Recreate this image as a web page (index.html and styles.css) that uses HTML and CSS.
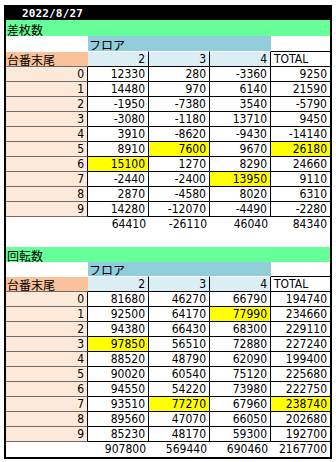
FILE: index.html
```html
<!DOCTYPE html>
<html lang="ja">
<head>
<meta charset="utf-8">
<link rel="stylesheet" href="styles.css">
</head>
<body>
<div class="sheet">
  <div class="title">2022/8/27</div>

  <div class="band band-first"><span class="jp">差枚数</span></div>
  <div class="row floor-row"><div></div><div class="floor"><span class="jp">フロア</span></div><div></div></div>
  <div class="row head">
    <div class="c0h"><span class="jp">台番末尾</span></div><div class="hc">2</div><div class="hc">3</div><div class="hc">4</div><div class="ht">TOTAL</div>
  </div>
  <div class="row data"><div class="c0">0</div><div>12330</div><div>280</div><div>-3360</div><div>9250</div></div>
  <div class="row data"><div class="c0">1</div><div>14480</div><div>970</div><div>6140</div><div>21590</div></div>
  <div class="row data"><div class="c0">2</div><div>-1950</div><div>-7380</div><div>3540</div><div>-5790</div></div>
  <div class="row data"><div class="c0">3</div><div>-3080</div><div>-1180</div><div>13710</div><div>9450</div></div>
  <div class="row data"><div class="c0">4</div><div>3910</div><div>-8620</div><div>-9430</div><div>-14140</div></div>
  <div class="row data"><div class="c0">5</div><div>8910</div><div class="hl">7600</div><div>9670</div><div class="hl">26180</div></div>
  <div class="row data"><div class="c0">6</div><div class="hl">15100</div><div>1270</div><div>8290</div><div>24660</div></div>
  <div class="row data"><div class="c0">7</div><div>-2440</div><div>-2400</div><div class="hl">13950</div><div>9110</div></div>
  <div class="row data"><div class="c0">8</div><div>2870</div><div>-4580</div><div>8020</div><div>6310</div></div>
  <div class="row data"><div class="c0">9</div><div>14280</div><div>-12070</div><div>-4490</div><div>-2280</div></div>
  <div class="row sum"><div></div><div>64410</div><div>-26110</div><div>46040</div><div>84340</div></div>
  <div class="gap"></div>

  <div class="band band-second"><span class="jp">回転数</span></div>
  <div class="row floor-row floor-row-second"><div></div><div class="floor"><span class="jp">フロア</span></div><div></div></div>
  <div class="row head">
    <div class="c0h"><span class="jp">台番末尾</span></div><div class="hc">2</div><div class="hc">3</div><div class="hc">4</div><div class="ht">TOTAL</div>
  </div>
  <div class="row data"><div class="c0">0</div><div>81680</div><div>46270</div><div>66790</div><div>194740</div></div>
  <div class="row data"><div class="c0">1</div><div>92500</div><div>64170</div><div class="hl">77990</div><div>234660</div></div>
  <div class="row data"><div class="c0">2</div><div>94380</div><div>66430</div><div>68300</div><div>229110</div></div>
  <div class="row data"><div class="c0">3</div><div class="hl">97850</div><div>56510</div><div>72880</div><div>227240</div></div>
  <div class="row data"><div class="c0">4</div><div>88520</div><div>48790</div><div>62090</div><div>199400</div></div>
  <div class="row data"><div class="c0">5</div><div>90020</div><div>60540</div><div>75120</div><div>225680</div></div>
  <div class="row data"><div class="c0">6</div><div>94550</div><div>54220</div><div>73980</div><div>222750</div></div>
  <div class="row data"><div class="c0">7</div><div>93510</div><div class="hl">77270</div><div>67960</div><div class="hl">238740</div></div>
  <div class="row data"><div class="c0">8</div><div>89560</div><div>47070</div><div>66050</div><div>202680</div></div>
  <div class="row data"><div class="c0">9</div><div>85230</div><div>48170</div><div>59300</div><div>192700</div></div>
  <div class="row sum"><div></div><div>907800</div><div>569440</div><div>690460</div><div>2167700</div></div>
</div>
</body>
</html>
```
FILE: styles.css
```css
* { box-sizing: border-box; }
html, body { margin: 0; padding: 0; background: #fff; }
body {
  font-family: "Liberation Sans Narrow", "DejaVu Sans Condensed", "Liberation Sans", sans-serif;
  font-size: 12px;
  color: #000;
}
.sheet {
  margin: 5px 0 0 4px;
  width: 328px;
  border: 2px solid #000;
  display: flex;
  flex-direction: column;
}
.jp {
  font-family: "Noto Sans CJK JP", sans-serif;
  font-size: 12px;
  line-height: 12px;
}
.title {
  height: 13px;
  background: #000;
  color: #fff;
  font-family: "DejaVu Sans Mono", monospace;
  font-weight: bold;
  font-size: 11px;
  line-height: 13px;
  letter-spacing: 0.15px;
  padding-left: 16px;
}
.band {
  background: #66ff99;
  display: flex;
  align-items: flex-end;
  padding-left: 1px;
}
.band-first { height: 16px; }
.band-second { height: 15px; }
.row {
  display: grid;
  grid-template-columns: 82px 61px 61px 61px 59px;
}
.floor-row { height: 15px; }
.floor-row-second { height: 14px; }
.floor {
  grid-column: span 3;
  background: #92cddc;
  display: flex;
  align-items: flex-end;
  padding-left: 1px;
}
.head { height: 16px; }
.head > div {
  border-top: 1px solid #fff;
  border-bottom: 1px solid #000;
  line-height: 14px;
}
.c0h {
  background: #f9c29a;
  display: flex;
  align-items: flex-end;
  padding-left: 1px;
  border-bottom-color: #6b6b6b !important;
}
.hc {
  background: #daeef3;
  text-align: right;
  padding-right: 3px;
  border-right: 1px solid #000;
}
.ht {
  border-top-color: #000 !important;
  padding-left: 3px;
  background: #fff;
}
.data { height: 15px; }
.data > div {
  line-height: 14px;
  text-align: right;
  padding-right: 3px;
  border-bottom: 1px solid #000;
  border-right: 1px solid #000;
}
.data > div:last-child { border-right: none; }
.data > .c0 {
  background: #fde9d9;
  border-bottom-color: #6b6b6b;
}
.data > .hl { background: #ffff00; }
.sum { height: 15px; }
.sum > div {
  line-height: 14px;
  text-align: right;
  padding-right: 3px;
}
.gap { height: 15px; }
```
